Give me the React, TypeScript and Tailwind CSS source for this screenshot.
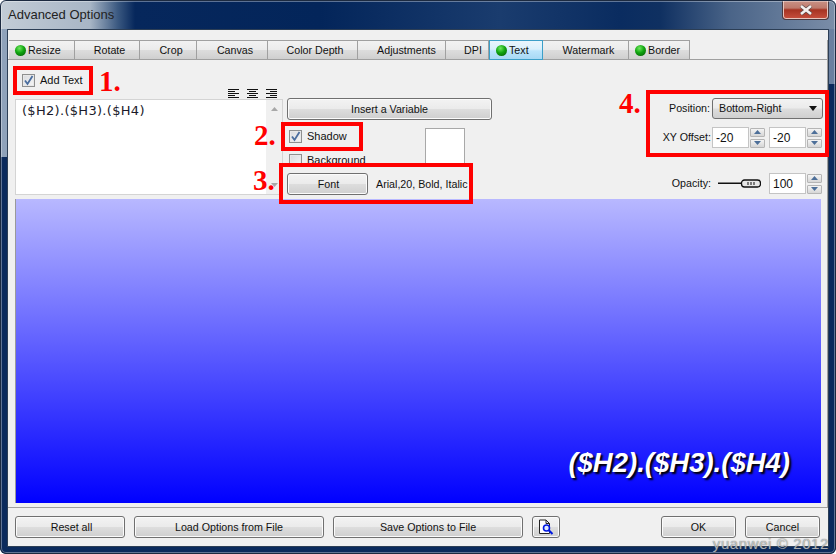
import type { ReactNode } from "react";

const tabs = [
  { label: "Resize", width: "w-[66px] justify-start pl-[6px]", on: true },
  { label: "Rotate", width: "w-[65px] justify-center pl-[5px]" },
  { label: "Crop", width: "w-[57px] justify-center pl-[6px]" },
  { label: "Canvas", width: "w-[71px] justify-center pl-[6px]" },
  { label: "Color Depth", width: "w-[90px] justify-center pl-[5px]" },
  { label: "Adjustments", width: "w-[88px] justify-center pl-[10px]" },
  { label: "DPI", width: "w-[43px] justify-center pl-[12px]" },
  { label: "Text", width: "w-[54px] justify-start pl-[6px]", on: true, active: true },
  { label: "Watermark", width: "w-[86px] justify-center pl-[6px]" },
  { label: "Border", width: "w-[61px] justify-start pl-[6px]", on: true },
];

const buttonClass =
  "flex items-center justify-center rounded-[3px] border border-[#707070] bg-[linear-gradient(180deg,#f3f3f3_0%,#ebebeb_48%,#dddddd_52%,#cfcfcf_100%)] text-[10.7px] text-[#111] shadow-[inset_0_0_0_1px_#fbfbfb]";

function Dot() {
  return (
    <span className="h-[11px] w-[11px] shrink-0 rounded-full bg-[radial-gradient(circle_at_40%_30%,#6fe85e_0%,#10a510_45%,#045204_100%)]" />
  );
}

function Button({ className, children }: { className: string; children: ReactNode }) {
  return <div className={`${buttonClass} ${className}`}>{children}</div>;
}

function Check({ checked }: { checked?: boolean }) {
  return (
    <span className="flex h-[13px] w-[13px] shrink-0 items-center justify-center border border-[#8e8f8f] bg-[linear-gradient(135deg,#d8dade,#f6f6f6)] shadow-[inset_0_0_0_1px_#e8e8e8]">
      {checked ? (
        <svg width="11" height="11" viewBox="0 0 11 11">
          <path d="M2 5.5 L4.5 9 L9.5 1" fill="none" stroke="#4a6d9e" strokeWidth="1.8" />
        </svg>
      ) : null}
    </span>
  );
}

function Spin() {
  return (
    <div className="flex w-[15px] shrink-0 flex-col gap-[2px]">
      <div className="flex h-[9px] items-center justify-center rounded-[1px] border border-[#b5b5b5] bg-[linear-gradient(180deg,#f4f4f4,#d6d6d6)]">
        <svg width="7" height="4" viewBox="0 0 7 4"><path d="M3.5 0 L7 4 L0 4 Z" fill="#4d6f99" /></svg>
      </div>
      <div className="flex h-[9px] items-center justify-center rounded-[1px] border border-[#b5b5b5] bg-[linear-gradient(180deg,#f4f4f4,#d6d6d6)]">
        <svg width="7" height="4" viewBox="0 0 7 4"><path d="M0 0 L7 0 L3.5 4 Z" fill="#4d6f99" /></svg>
      </div>
    </div>
  );
}

function NumberBox({ value }: { value: string }) {
  return (
    <div className="flex h-[21px] w-[37px] shrink-0 items-center border border-[#c4c4c4] bg-white pl-[3px] text-[12px] text-[#111]">
      {value}
    </div>
  );
}

function AlignIcon({ kind }: { kind: "left" | "center" | "right" }) {
  const rows = [11, 7, 11, 7, 11];
  return (
    <svg width="11" height="10" viewBox="0 0 11 10">
      {rows.map((w, i) => {
        const x = kind === "left" ? 0 : kind === "center" ? (11 - w) / 2 : 11 - w;
        return <rect key={i} x={x} y={i * 2} width={w} height="1" fill="#111" />;
      })}
    </svg>
  );
}

function Mark({ className, children }: { className: string; children: ReactNode }) {
  return (
    <div className={`absolute font-['Liberation_Serif',serif] text-[29px] leading-none font-bold text-[#f00] ${className}`}>
      {children}
    </div>
  );
}

export default function App() {
  return (
    <div className="relative h-[554px] w-[836px] overflow-hidden rounded-[6px] font-['Liberation_Sans',Arial,sans-serif] [background:linear-gradient(#8fa2ba,#8fa2ba)_0_29px/7px_128px_no-repeat,linear-gradient(#6a80a0,#6a80a0)_100%_29px/7px_55px_no-repeat,#0b2a5c]">
      {/* title bar */}
      <div className="flex h-[29px] items-start justify-between bg-[linear-gradient(90deg,#c3ccd6_0px,#a8b6c6_90px,#3a5880_118px,#06275c_135px,#03255a_320px,#1a3c6e_500px,#0a2c60_620px,#0f3061_660px,#4a6488_730px,#7b8ea8_836px)]">
        <span className="pt-[7px] pl-[8px] text-[13px] leading-[16px] text-[#222]">Advanced Options</span>
        <div className="mr-[7px] flex h-[20px] w-[47px] items-center justify-center rounded-b-[4px] border border-t-0 border-[#4a3a40] bg-[linear-gradient(180deg,#c99488_0%,#bd7a6c_42%,#a63322_52%,#c8503e_100%)] shadow-[inset_0_0_0_1px_#e6c4bc]">
          <svg width="16" height="12" viewBox="0 0 16 12">
            <path d="M3 2 L13 10 M13 2 L3 10" stroke="#5a4a4a" strokeWidth="4" />
            <path d="M3 2 L13 10 M13 2 L3 10" stroke="#f4f0ee" strokeWidth="2.6" />
          </svg>
        </div>
      </div>

      {/* client area */}
      <div className="relative ml-[7px] flex h-[518px] w-[822px] flex-col border border-[#2c3e55] bg-[#f0f0f0]">
        {/* tabs */}
        <div className="mt-[10px] flex h-[20px] shrink-0 border-r border-b border-[#a0a0a0] pl-[1px]">
          {tabs.map((tab) => (
            <div
              key={tab.label}
              className={`-mb-[1px] flex h-[20px] items-center gap-[2px] border text-[10.7px] text-[#111] ${tab.width} ${
                tab.active
                  ? "border-[#3c9fc8] bg-[linear-gradient(180deg,#eaf6fd,#d9f0fc_45%,#bce5fc_55%,#a7d9f5)]"
                  : "border-[#a0a0a0] border-l-0 bg-[linear-gradient(180deg,#f2f2f2,#ebebeb_48%,#dddddd_52%,#cfcfcf)]"
              }`}
            >
              {tab.on ? <Dot /> : null}
              {tab.label}
            </div>
          ))}
        </div>

        {/* options */}
        <div className="flex h-[139px] shrink-0 border-r border-[#a0a0a0] pl-[7px]">
          <div className="flex w-[268px] shrink-0 flex-col pt-[12px]">
            <div className="flex h-[17px] items-center gap-[5px] pl-[7px] text-[11px] text-[#111]">
              <Check checked />
              Add Text
            </div>
            <div className="flex h-[10px] items-center justify-end gap-[8px] pr-[6px]">
              <AlignIcon kind="left" />
              <AlignIcon kind="center" />
              <AlignIcon kind="right" />
            </div>
            <div className="flex h-[96px] border border-[#d4d4d4] bg-white">
              <div className="flex-1 pt-[3px] pl-[6px] font-['DejaVu_Sans',sans-serif] text-[13px] leading-[16px] tracking-[0.3px] text-[#1a1a2a]">
                ($H2).($H3).($H4)
              </div>
              <div className="flex w-[16px] flex-col items-center justify-between bg-[#f0f0f0] py-[7px]">
                <svg width="7" height="4" viewBox="0 0 7 4"><path d="M3.5 0 L7 4 L0 4 Z" fill="#a8a8a8" /></svg>
                <svg width="7" height="4" viewBox="0 0 7 4"><path d="M0 0 L7 0 L3.5 4 Z" fill="#a8a8a8" /></svg>
              </div>
            </div>
          </div>

          <div className="ml-[4px] w-[205px] shrink-0 pt-[38px]">
            <Button className="h-[22px] w-[205px]">Insert a Variable</Button>
            <div className="mt-[8px] flex h-[37px] justify-between overflow-hidden pr-[27px]">
              <div className="flex flex-col gap-[11px] pt-[2px] pl-[2px] text-[11px] text-[#111]">
                <div className="flex h-[13px] items-center gap-[5px]">
                  <Check checked />
                  Shadow
                </div>
                <div className="flex h-[13px] items-center gap-[5px]">
                  <Check />
                  Background
                </div>
              </div>
              <div className="h-[40px] w-[40px] border border-[#a8a8a8] bg-white" />
            </div>
            <div className="mt-[8px] flex items-center gap-[8px]">
              <Button className="h-[22px] w-[81px] pl-[2px]">Font</Button>
              <span className="text-[10.7px] whitespace-nowrap text-[#111]">Arial,20, Bold, Italic</span>
            </div>
          </div>

          <div className="flex w-[331px] shrink-0 flex-col pt-[38px] text-[10.7px] text-[#111]">
            <div className="flex h-[21px] items-center justify-end gap-[2px]">
              <span>Position:</span>
              <div className="flex h-[21px] w-[111px] items-center justify-between rounded-[3px] border border-[#707070] bg-[linear-gradient(180deg,#f3f3f3,#ebebeb_48%,#dddddd_52%,#cfcfcf)] pr-[5px] pl-[6px]">
                Bottom-Right
                <svg width="8" height="5" viewBox="0 0 8 5"><path d="M0 0 L8 0 L4 5 Z" fill="#111" /></svg>
              </div>
            </div>
            <div className="mt-[8px] flex h-[21px] items-center">
              <span className="flex-1 text-right">XY Offset:</span>
              <div className="ml-[1px] flex items-center gap-[1px] pr-[1px]">
                <NumberBox value="-20" />
                <Spin />
                <div className="w-[2px]" />
                <NumberBox value="-20" />
                <Spin />
              </div>
            </div>
            <div className="mt-[25px] flex h-[21px] items-center">
              <span className="flex-1 text-right">Opacity:</span>
              <svg className="mr-[8px] ml-[7px]" width="43" height="9" viewBox="0 0 43 9">
                <rect x="0" y="3.5" width="24" height="1.5" fill="#111" />
                <rect x="23.5" y="1" width="19" height="7" rx="3" fill="#e8e8e8" stroke="#111" strokeWidth="1.3" />
                <path d="M30 3 V6 M33 3 V6 M36 3 V6" stroke="#111" strokeWidth="1" />
              </svg>
              <div className="flex items-center gap-[1px] pr-[1px]">
                <NumberBox value="100" />
                <Spin />
              </div>
            </div>
          </div>
        </div>

        {/* preview */}
        <div className="h-[309px] shrink-0 border-r border-b border-[#a0a0a0] px-[7px]">
          <div className="flex h-[304px] w-[806px] items-end justify-end border-l border-[#9a9a9a] bg-[linear-gradient(180deg,#b8b8ff,#0000ff)] pr-[31px] pb-[25px]">
            <span className="text-[27.5px] leading-[31px] font-bold whitespace-nowrap text-white italic [text-shadow:2px_2px_2px_#000]">
              ($H2).($H3).($H4)
            </span>
          </div>
        </div>

        {/* footer */}
        <div className="flex items-start pt-[8px] pl-[7px]">
          <Button className="h-[22px] w-[110px] pt-[1px] pl-[3px]">Reset all</Button>
          <Button className="ml-[9px] h-[22px] w-[190px] pt-[1px]">Load Options from File</Button>
          <Button className="ml-[9px] h-[22px] w-[190px] pt-[1px]">Save Options to File</Button>
          <Button className="ml-[9px] h-[22px] w-[28px]">
            <svg width="16" height="16" viewBox="0 0 16 16">
              <path d="M1.5 1 H8 L11.5 4.5 V14.5 H1.5 Z M8 1 V4.5 H11.5" fill="#fff" stroke="#222" strokeWidth="1" />
              <circle cx="8.5" cy="9" r="3" fill="#dfe9ff" stroke="#0018e0" strokeWidth="1.6" />
              <path d="M10.8 11.3 L14.5 15" stroke="#0018e0" strokeWidth="2" />
            </svg>
          </Button>
          <Button className="ml-[101px] h-[22px] w-[75px] pt-[1px]">OK</Button>
          <Button className="ml-[9px] h-[22px] w-[75px] pt-[1px]">Cancel</Button>
        </div>
      </div>

      {/* red annotations */}
      <div className="absolute top-[66px] left-[13px] h-[29px] w-[80px] border-[4px] border-[#f00]" />
      <div className="absolute top-[122px] left-[281px] h-[29px] w-[82px] border-[4px] border-[#f00]" />
      <div className="absolute top-[163px] left-[279px] h-[41px] w-[194px] border-[4px] border-[#f00]" />
      <div className="absolute top-[90px] left-[646px] h-[67px] w-[183px] border-[4px] border-[#f00]" />
      <Mark className="top-[67px] left-[99px]">1.</Mark>
      <Mark className="top-[121px] left-[254px]">2.</Mark>
      <Mark className="top-[166px] left-[253px]">3.</Mark>
      <Mark className="top-[89px] left-[619px]">4.</Mark>

      {/* window edge */}
      <div className="pointer-events-none absolute inset-0 rounded-[6px] border border-[#1c2a40] shadow-[inset_0_0_0_1px_rgba(255,255,255,0.35)]" />

      <div className="absolute right-[7px] bottom-[1px] text-[15px] leading-[18px] tracking-[0.6px] text-white/60 [text-shadow:0_0_1px_#444]">
        yuanwei © 2012
      </div>
    </div>
  );
}
